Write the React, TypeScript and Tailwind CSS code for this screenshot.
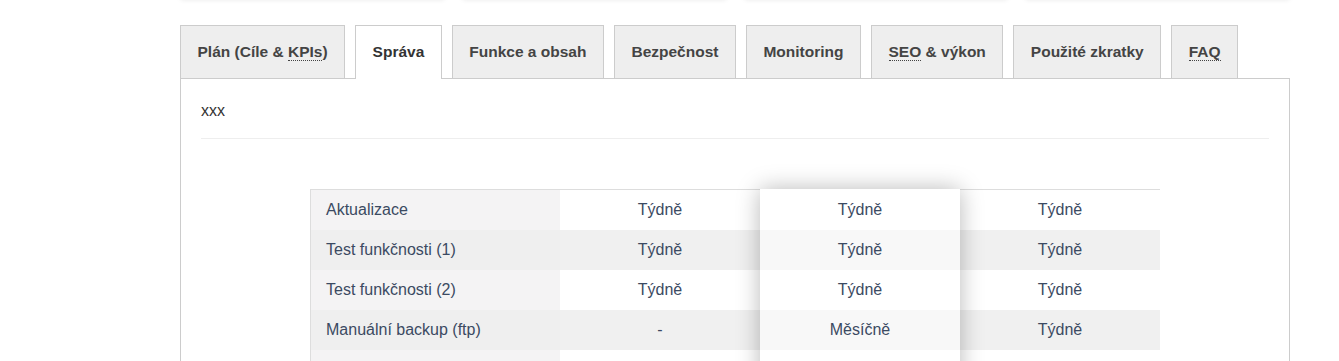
const tabs: { label: React.ReactNode; active?: boolean }[] = [
  { label: <>Plán (Cíle &amp; <Abbr>KPIs</Abbr>)</> },
  { label: 'Správa', active: true },
  { label: 'Funkce a obsah' },
  { label: 'Bezpečnost' },
  { label: 'Monitoring' },
  { label: <><Abbr>SEO</Abbr> &amp; výkon</> },
  { label: 'Použité zkratky' },
  { label: <Abbr>FAQ</Abbr> },
];

const rows = [
  ['Aktualizace', 'Týdně', 'Týdně', 'Týdně'],
  ['Test funkčnosti (1)', 'Týdně', 'Týdně', 'Týdně'],
  ['Test funkčnosti (2)', 'Týdně', 'Týdně', 'Týdně'],
  ['Manuální backup (ftp)', '-', 'Měsíčně', 'Týdně'],
  ['', '', '', ''],
];

function Abbr({ children }: { children: React.ReactNode }) {
  return (
    <abbr className="no-underline border-b border-dotted border-[#444]">
      {children}
    </abbr>
  );
}

function Column({ index, featured }: { index: number; featured?: boolean }) {
  const first = index === 0;
  return (
    <div
      className={
        first
          ? 'w-[250px] border-t border-l border-[#ddd]'
          : featured
            ? 'relative z-10 w-[200px] border-t border-white bg-white shadow-[0_0_22px_rgba(0,0,0,0.28)]'
            : 'w-[200px] border-t border-[#ddd]'
      }
    >
      {rows.map((row, r) => {
        const odd = r % 2 === 0;
        let bg = odd ? 'bg-white' : 'bg-[#f0f0f0]';
        if (first) bg = odd ? 'bg-[#f4f3f4]' : 'bg-[#efefef]';
        if (featured) bg = odd ? 'bg-white' : 'bg-[#f8f8f8]';
        return (
          <div
            key={r}
            className={`flex h-10 items-center ${bg} ${first ? 'pl-[15px]' : 'justify-center'}`}
          >
            {row[index]}
          </div>
        );
      })}
    </div>
  );
}

export default function App() {
  return (
    <div className="h-[361px] w-[1339px] overflow-hidden bg-white font-['Liberation_Sans',Arial,sans-serif]">
      <div className="ml-[180px] -mt-[20px] grid h-[20px] w-[1110px] grid-cols-4 gap-[17px]">
        {[0, 1, 2, 3].map((i) => (
          <div key={i} className="h-[19px] rounded-b bg-white shadow-[0_1px_5px_rgba(0,0,0,0.09)]" />
        ))}
      </div>

      <div className="ml-[180px] mt-[25px] flex items-end gap-[10px]">
        {tabs.map((tab, i) => (
          <div
            key={i}
            className={
              tab.active
                ? 'relative z-10 -mb-px flex h-[54px] items-center border border-b-0 border-[#ccc] bg-white px-[16.5px] pb-px text-[15.5px] font-bold text-[#333]'
                : 'flex h-[53px] items-center border border-b-0 border-[#ccc] bg-[#eee] px-[16.5px] text-[15.5px] font-bold text-[#444]'
            }
          >
            <span className="whitespace-nowrap">{tab.label}</span>
          </div>
        ))}
      </div>

      <div className="ml-[180px] h-[300px] w-[1110px] border border-[#ccc] px-5 pt-5">
        <p className="text-[16px] leading-6 text-[#333]">xxx</p>
        <div className="mt-[15px] border-t border-[#eee]" />

        <div className="ml-[109px] mt-[50px] flex text-[16px] text-[#3b4a62]">
          <Column index={0} />
          <Column index={1} />
          <Column index={2} featured />
          <Column index={3} />
        </div>
      </div>
    </div>
  );
}
